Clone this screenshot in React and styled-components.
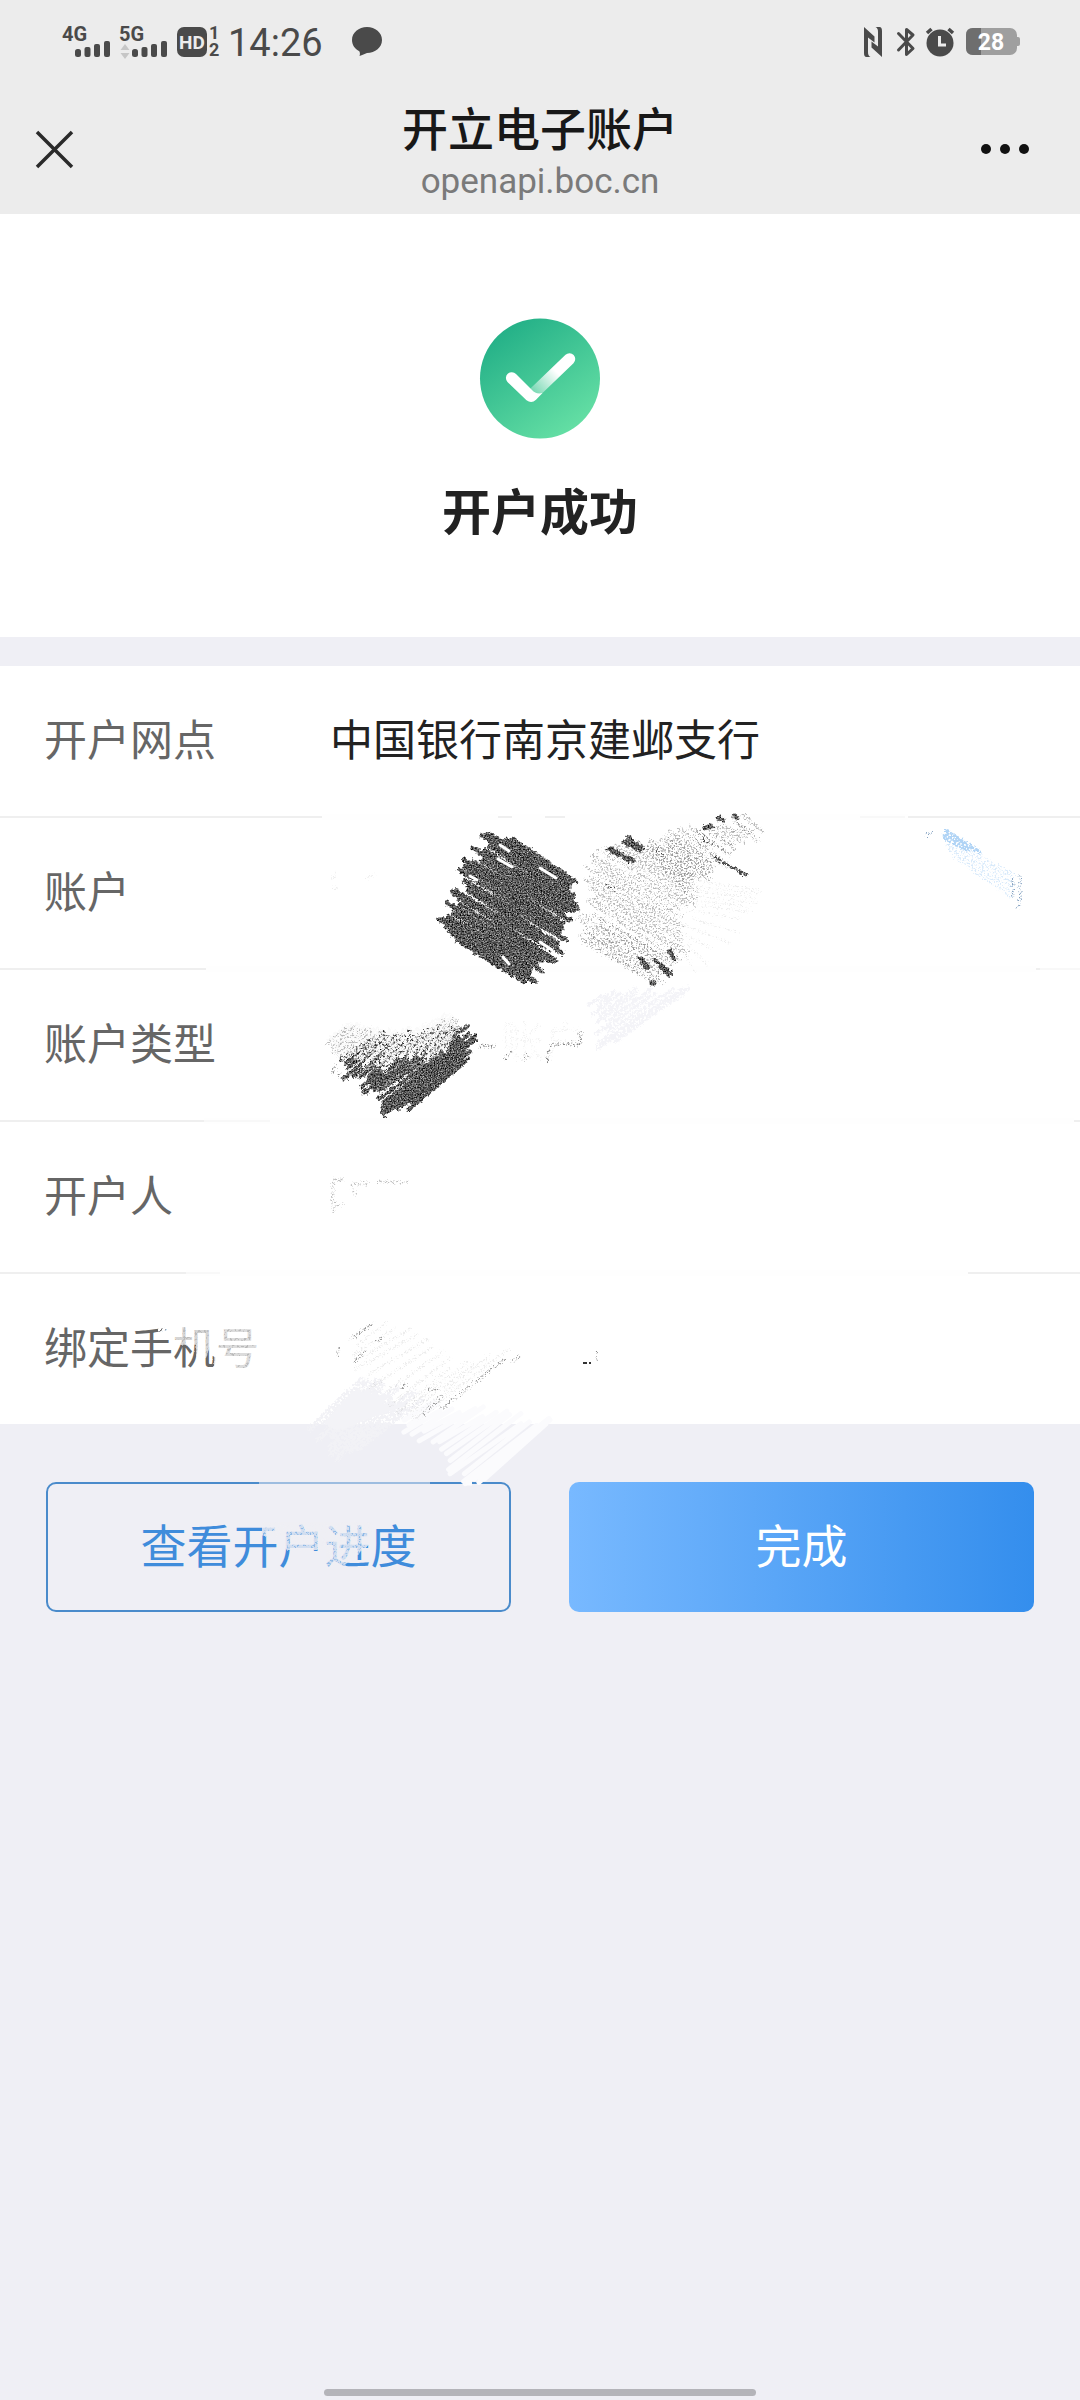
import React from "react";
import styled, { createGlobalStyle } from "styled-components";

const GlobalStyle = createGlobalStyle`
  * {
    box-sizing: border-box;
  }
  body {
    margin: 0;
    background-color: #efeff5;
    font-family: "Noto Sans CJK SC", sans-serif;
  }
`;
const Page = styled.div`
  display: flex;
  flex-direction: column;
  min-height: 100vh;
  overflow: hidden;
`;
const Header = styled.header`
  background-color: #ececec;
`;
const StatusBar = styled.div`
  display: flex;
  justify-content: space-between;
  align-items: center;
  height: 84px;
  padding: 0 60px 0 63px;
  color: #4a4a4a;
`;
const StatusGroup = styled.div`
  display: flex;
  align-items: center;
  gap: ${(props) => props.$gap}px;
`;
const Icon = styled.svg`
  display: block;
  flex: none;
  overflow: visible;
  font-family: Roboto, sans-serif;
  font-weight: 700;
`;
const Time = styled.time`
  padding-top: 2px;
  font-family: Roboto, sans-serif;
  font-size: 38px;
  line-height: 48px;
  margin-right: 20px;
`;
const NavBar = styled.div`
  display: flex;
  justify-content: space-between;
  align-items: center;
  height: 130px;
  padding: 0 50px 0 36px;
`;
const IconButton = styled.button`
  display: flex;
  flex: 1;
  justify-content: ${(props) => props.$align};
  padding: 0;
  border: none;
  background: none;
`;
const NavTitle = styled.div`
  padding: 6px 0 0 14px;
  text-align: center;
`;
const Title = styled.h1`
  margin: 0 0 4px;
  font-size: 46px;
  font-weight: 500;
  line-height: 56px;
  color: #181818;
`;
const Host = styled.div`
  font-family: Roboto, sans-serif;
  font-size: 35px;
  line-height: 48px;
  color: #7a7a7a;
`;
const Result = styled.section`
  display: flex;
  flex-direction: column;
  align-items: center;
  padding: 104px 0 92px;
  background-color: #ffffff;
`;
const ResultText = styled.h2`
  margin: 34px 0 0;
  font-size: 49px;
  font-weight: 700;
  line-height: 72px;
  color: #222222;
`;
const Content = styled.main`
  position: relative;
  margin-top: 29px;
`;
const Details = styled.dl`
  margin: 0;
  background-color: #ffffff;
`;
const Row = styled.div`
  display: flex;
  align-items: center;
  padding: 0 44px 8px;
  border-bottom: 2px solid #efefef;
  &:last-child {
    border-bottom: none;
  }
`;
const Label = styled.dt`
  width: 286px;
  font-size: 43px;
  line-height: 142px;
  color: #666666;
`;
const Value = styled.dd`
  margin: 0;
  font-size: 43px;
  line-height: 142px;
  color: #222222;
`;
const Actions = styled.div`
  display: grid;
  grid-template-columns: 1fr 1fr;
  gap: 58px;
  padding: 58px 46px;
`;
const Button = styled.button`
  height: 130px;
  padding: 0 0 8px;
  border: ${(props) => (props.$primary ? "none" : "2px solid #4a8bcb")};
  border-radius: 10px;
  background: ${(props) =>
    props.$primary ? "linear-gradient(90deg, #78b9ff, #348eed)" : "none"};
  color: ${(props) => (props.$primary ? "#ffffff" : "#3f8cdb")};
  font-family: inherit;
  font-size: 46px;
`;
const Overlay = styled.svg`
  position: absolute;
  top: 0;
  left: 0;
  width: 100%;
  pointer-events: none;
`;
const HomeBar = styled.div`
  align-self: center;
  width: 40%;
  height: 7px;
  margin: auto 0 4px;
  border-radius: 4px;
  background-color: #b4b4b9;
`;

const rows = [
  { label: "开户网点", value: "中国银行南京建邺支行" },
  { label: "账户", value: "" },
  { label: "账户类型", value: "" },
  { label: "开户人", value: "" },
  { label: "绑定手机号", value: "" },
];

function random(seed) {
  let s = seed;
  return () => {
    s = (s * 16807) % 2147483647;
    return s / 2147483647;
  };
}

// point at t (0..1) along a polyline
function along(points, t) {
  const pos = t * (points.length - 1);
  const i = Math.min(Math.floor(pos), points.length - 2);
  const f = pos - i;
  return [
    points[i][0] + (points[i + 1][0] - points[i][0]) * f,
    points[i][1] + (points[i + 1][1] - points[i][1]) * f,
  ];
}

// roughly parallel pencil strokes between two edges
function hatch(from, to, count, jitter, seed) {
  const next = random(seed * 7919);
  next();
  let d = "";
  for (let i = 0; i < count; i++) {
    const t = i / (count - 1);
    const [x1, y1] = along(from, t);
    const [x2, y2] = along(to, t);
    const a = (next() - 0.5) * jitter;
    const b = (next() - 0.5) * jitter;
    const lift = (next() - 0.5) * 4;
    const len = Math.hypot(x2 - x1, y2 - y1) || 1;
    const ux = (x2 - x1) / len;
    const uy = (y2 - y1) / len;
    d += `M${(x1 + ux * a).toFixed(1)} ${(y1 + uy * a + lift).toFixed(1)}`;
    d += `L${(x2 + ux * b).toFixed(1)} ${(y2 + uy * b - lift).toFixed(1)}`;
  }
  return d;
}

function Hatch({ from, to, count, jitter = 16, seed = 7, width = 5, ...rest }) {
  return (
    <path
      d={hatch(from, to, count, jitter, seed)}
      strokeWidth={width}
      strokeLinecap="round"
      fill="none"
      {...rest}
    />
  );
}

function Scribbles() {
  return (
    <Overlay viewBox="0 666 1080 960" aria-hidden="true">
      <defs>
        <filter id="charcoal" x="-10%" y="-10%" width="120%" height="120%" colorInterpolationFilters="sRGB">
          <feTurbulence type="fractalNoise" baseFrequency="0.3" numOctaves="2" seed="3" result="wave" />
          <feDisplacementMap in="SourceGraphic" in2="wave" scale="6" xChannelSelector="R" yChannelSelector="G" result="edge" />
          <feTurbulence type="fractalNoise" baseFrequency="0.73" numOctaves="2" seed="8" />
          <feColorMatrix values="1.3 0 0 0 -0.3  1.3 0 0 0 -0.3  1.3 0 0 0 -0.3  0 0 0 0 1" />
          <feComposite in2="edge" operator="in" />
        </filter>
        <filter id="dust" x="-10%" y="-10%" width="120%" height="120%" colorInterpolationFilters="sRGB">
          <feTurbulence type="fractalNoise" baseFrequency="0.57" numOctaves="3" seed="5" result="noise" />
          <feDisplacementMap in="SourceGraphic" in2="noise" scale="7" xChannelSelector="B" yChannelSelector="G" result="edge" />
          <feColorMatrix in="noise" values="0 0 0 0 0  0 0 0 0 0  0 0 0 0 0  6 0 0 0 -2.9" result="mask" />
          <feComposite in="edge" in2="mask" operator="in" />
        </filter>
        <filter id="chalk" x="-10%" y="-10%" width="120%" height="120%" colorInterpolationFilters="sRGB">
          <feTurbulence type="fractalNoise" baseFrequency="0.43" numOctaves="2" seed="9" result="noise" />
          <feDisplacementMap in="SourceGraphic" in2="noise" scale="6" xChannelSelector="R" yChannelSelector="G" result="edge" />
          <feColorMatrix in="noise" values="0 0 0 0 0  0 0 0 0 0  0 0 0 0 0  8 0 0 0 -2.8" result="mask" />
          <feComposite in="edge" in2="mask" operator="in" />
        </filter>
      </defs>

      {/* rubbed out dividers */}
      <path d="M322 817H498M512 817H545M565 817H908M206 969H1036M204 1121H1074M186 1273H968" stroke="#fefefe" strokeWidth="6" />
      <path d="M204 1121H270M186 1273H220M860 817H905M1040 969H1080" stroke="#f8f8f8" strokeWidth="2" />

      {/* account number */}
      <Hatch from={[[508, 836], [484, 838], [473, 856], [464, 876], [458, 894], [446, 916], [458, 942]]} to={[[572, 880], [576, 898], [566, 916], [562, 936], [550, 954], [540, 968], [526, 981]]} count={26} width={5} jitter={20} seed={12} stroke="#444" filter="url(#charcoal)" />
      <path d="M438 919L466 938M454 895L470 905M486 834L500 843M558 912L574 910" stroke="#444" strokeWidth="4" strokeLinecap="round" filter="url(#charcoal)" />
      <path d="M500 845L509 851M498 859L512 867M470 876L477 880M540 868L556 878M503 957L509 964M540 942L552 950" stroke="#ffffff" strokeWidth="3" strokeLinecap="round" />
      <Hatch from={[[742, 816], [676, 834], [640, 850], [603, 846], [592, 872], [590, 900], [580, 938]]} to={[[762, 830], [718, 866], [696, 880], [690, 890], [684, 925], [680, 955], [652, 982]]} count={34} width={4} seed={4} stroke="#777" opacity="0.5" filter="url(#dust)" />
      <Hatch from={[[600, 920], [582, 936]]} to={[[676, 962], [652, 982]]} count={7} width={3} stroke="#777" opacity="0.5" filter="url(#dust)" />
      <Hatch from={[[735, 822], [676, 836], [650, 852]]} to={[[752, 832], [706, 866], [684, 888]]} count={14} width={4} stroke="#777" opacity="0.5" filter="url(#dust)" />
      <path d="M628 838L642 848M624 842L640 850M608 849L632 861M612 850L632 860M656 961L670 974M660 964L668 974M705 828L711 826M719 818L723 820M735 817L737 818M641 960L647 967M652 983L654 983M670 952L674 958" stroke="#333" strokeWidth="5" strokeLinecap="round" filter="url(#charcoal)" />
      <path d="M714 857L748 876" stroke="#444" strokeWidth="3" filter="url(#chalk)" />
      <path d="M702 838L712 846M656 848L664 856M604 884L616 890" stroke="#444" strokeWidth="3" filter="url(#dust)" />
      <Hatch from={[[690, 880], [692, 905], [680, 950]]} to={[[762, 890], [745, 915], [700, 975]]} count={12} width={2} stroke="#bbb" opacity="0.25" filter="url(#dust)" />
      <Hatch from={[[588, 1006], [600, 1020], [605, 1042], [630, 1032]]} to={[[605, 994], [640, 994], [680, 996], [684, 990]]} count={14} width={4} jitter={26} stroke="#f4f4f8" filter="url(#chalk)" />
      <path d="M332 880L336 872M332 886L337 890M366 878L376 874" stroke="#eeeeee" strokeWidth="3" filter="url(#dust)" />
      <Hatch from={[[946, 831], [944, 836]]} to={[[980, 852], [966, 850]]} count={4} width={4} jitter={6} stroke="#a9d0f5" opacity="0.9" filter="url(#chalk)" />
      <Hatch from={[[945, 838], [950, 852]]} to={[[1013, 874], [1008, 896]]} count={6} width={3} stroke="#b4d6f7" opacity="0.5" filter="url(#dust)" />
      <path d="M1020 875V898L1018 908M1013 880V898M926 835L934 832" stroke="#86a3c2" strokeWidth="3" fill="none" filter="url(#dust)" />

      {/* account type */}
      <Hatch from={[[340, 1062], [352, 1072], [366, 1080], [367, 1092], [386, 1098], [387, 1113], [410, 1107]]} to={[[372, 1036], [400, 1034], [430, 1030], [464, 1026], [470, 1036], [468, 1048], [464, 1064]]} count={20} width={4} jitter={20} seed={21} stroke="#444" filter="url(#charcoal)" />
      <path d="M384 1115L404 1090M410 1108L430 1088M366 1092L384 1074" stroke="#444" strokeWidth="4" strokeLinecap="round" filter="url(#charcoal)" />
      <Hatch from={[[330, 1040], [342, 1054], [384, 1068], [400, 1050], [428, 1062], [446, 1046]]} to={[[350, 1024], [380, 1034], [405, 1034], [425, 1026], [444, 1018], [456, 1020]]} count={20} width={6} jitter={10} stroke="#fafafa" filter="url(#chalk)" />
      <Hatch from={[[324, 1046], [340, 1056], [380, 1066], [400, 1050], [430, 1058], [448, 1044]]} to={[[346, 1028], [375, 1034], [405, 1042], [425, 1032], [448, 1020], [462, 1022]]} count={24} width={3} stroke="#777" opacity="0.5" filter="url(#dust)" />
      <text x="501" y="1058" fontSize="43" fill="#888" opacity="0.1" filter="url(#dust)">账户</text>
      <path d="M478 1046H496M552 1044H580V1030M504 1060L512 1050M546 1062L551 1046M332 1074L336 1064M338 1077L340 1072M524 1060L527 1054" stroke="#888" strokeWidth="3" fill="none" filter="url(#dust)" />

      {/* account holder */}
      <path d="M333 1212V1180H344M350 1184H368M336 1205H343M352 1190L356 1196M378 1182H410" stroke="#999" strokeWidth="3" fill="none" opacity="0.6" filter="url(#dust)" />

      {/* phone number */}
      <path d="M152 1320L172 1318V1332H160Z" fill="#ffffff" filter="url(#chalk)" />
      <path d="M172 1320H212V1340L206 1358H196V1345H176Z" fill="#ffffff" opacity="0.4" filter="url(#chalk)" />
      <path d="M172 1320H212V1340L206 1358H196V1345H176ZM214 1322H260V1370H214Z" fill="#ffffff" opacity="0.55" />
      <path d="M214 1322H260V1370H214Z" fill="#ffffff" opacity="0.5" filter="url(#chalk)" />
      <Hatch from={[[316, 1424], [334, 1438], [354, 1454]]} to={[[354, 1384], [385, 1392], [410, 1408]]} count={18} width={5} jitter={34} seed={5} stroke="#f2f2f6" filter="url(#chalk)" />
      <Hatch from={[[326, 1424], [350, 1424]]} to={[[354, 1392], [402, 1404]]} count={14} width={4} jitter={14} stroke="#f3f3f7" />
      <Hatch from={[[398, 1424], [418, 1440], [446, 1458], [466, 1482], [490, 1474]]} to={[[430, 1404], [470, 1410], [510, 1412], [540, 1424], [546, 1424]]} count={20} width={5} jitter={22} seed={9} stroke="#fbfbfd" />
      <Hatch from={[[350, 1340], [356, 1370], [400, 1408], [422, 1416]]} to={[[374, 1322], [420, 1338], [450, 1366], [506, 1350]]} count={14} width={3} stroke="#999" opacity="0.18" filter="url(#dust)" />
      <path d="M352 1338L372 1324M354 1362L366 1350M402 1388L407 1383M422 1416L442 1396M440 1410L506 1358M376 1342L384 1338M338 1348V1356M520 1357L512 1362M428 1389H438" stroke="#777" strokeWidth="3" fill="none" opacity="0.7" filter="url(#dust)" />
      <path d="M583 1363H591" stroke="#333" strokeWidth="2" strokeDasharray="4 2" />
      <path d="M596 1360L597 1352" stroke="#888" strokeWidth="3" filter="url(#dust)" />

      {/* worn button outline and caption */}
      <path d="M259 1483H430" stroke="#efeff5" strokeWidth="6" opacity="0.5" />
      <path d="M259 1483H430" stroke="#efeff5" strokeWidth="6" filter="url(#chalk)" />
      <path d="M466 1483H472" stroke="#fcfcfd" strokeWidth="5" />
      <path d="M262 1522H372V1542L344 1566H326V1550H286V1536H262Z" fill="#efeff5" opacity="0.45" />
      <path d="M262 1522H372V1542L344 1566H326V1550H286V1536H262Z" fill="#efeff5" opacity="0.7" filter="url(#chalk)" />
    </Overlay>
  );
}

function Signal({ name, arrows }) {
  return (
    <Icon width="48" height="32" viewBox="0 0 48 32" fill="currentColor">
      <text x="-1" y="15" fontSize="20">{name}</text>
      {arrows && <path d="M5 18L9.500 24H.5ZM5 33L.5 27H9.500Z" fill="#c6c6c6" />}
      <rect x="12" y="23" width="6" height="8" rx="2.500" />
      <rect x="21.500" y="21" width="6" height="10" rx="2" />
      <rect x="31" y="18" width="6" height="13" rx="2" />
      <rect x="41" y="15" width="6" height="16" rx="2" />
    </Icon>
  );
}

function App() {
  return (
    <Page>
      <GlobalStyle />
      <Header>
        <StatusBar>
          <StatusGroup $gap={9}>
            <Signal name="4G" />
            <Signal name="5G" arrows />
            <Icon width="42" height="30" viewBox="0 0 42 30" fill="currentColor">
              <rect width="30" height="30" rx="7" />
              <text x="15" y="22" fontSize="19" textAnchor="middle" fill="#ececec">HD</text>
              <text x="32" y="12" fontSize="18">1</text>
              <text x="32" y="29" fontSize="18">2</text>
            </Icon>
            <Time>14:26</Time>
            <Icon width="30" height="30" viewBox="0 0 30 30" fill="currentColor">
              <path d="M15 0C23.300 0 30 5.600 30 13S23.300 26 15 26C12.500 26.800 10.500 28 7.500 29C8.200 27 8 25.500 7.300 24.200C3 22 0 18 0 13C0 5.600 6.700 0 15 0Z" />
            </Icon>
          </StatusGroup>
          <StatusGroup $gap={10}>
            <Icon width="22" height="30" viewBox="0 0 22 30" fill="currentColor">
              <path d="M0 0L10.500 9.500V15.500L4 10.500V25C4 27.500 4.500 29 6.500 30H2.500C.8 30 0 28.500 0 26Z" />
              <path d="M18 30L7.500 20.500V14.500L14 19.500V5C14 2.500 13.500 1 11.500 0H15.500C17.200 0 18 1.500 18 4Z" />
            </Icon>
            <Icon width="20" height="30" viewBox="0 0 20 30" fill="none" stroke="currentColor" strokeWidth="3" strokeLinejoin="round" strokeLinecap="round">
              <path d="M2.500 6.500L17 21.500L10.500 27.500V2.500L17 8L2.500 23" />
            </Icon>
            <Icon width="30" height="30" viewBox="0 0 30 30" fill="currentColor">
              <circle cx="14" cy="16" r="13.500" />
              <path d="M1 6L5.500 2M22.500 2L27 6" stroke="currentColor" strokeWidth="3.500" />
              <path d="M13.500 9V18H20" fill="none" stroke="#ececec" strokeWidth="3" />
            </Icon>
            <Icon width="54" height="28" viewBox="0 0 54 28">
              <rect y="0" width="51" height="27" rx="7" fill="#9f9f9f" />
              <path d="M51 9H52Q54 9 54 11V16Q54 18 52 18H51Z" fill="#9f9f9f" />
              <path d="M15 0V27H7Q0 27 0 20V7Q0 0 7 0Z" fill="#6e6e6e" />
              <text x="25" y="22" fontSize="23" textAnchor="middle" fill="#ffffff">28</text>
            </Icon>
          </StatusGroup>
        </StatusBar>
        <NavBar>
          <IconButton type="button" aria-label="关闭" $align="flex-start">
            <Icon width="37" height="37" viewBox="0 0 37 37" stroke="#2a2a2a" strokeWidth="3.500">
              <path d="M1 1L36 36M36 1L1 36" />
            </Icon>
          </IconButton>
          <NavTitle>
            <Title>开立电子账户</Title>
            <Host>openapi.boc.cn</Host>
          </NavTitle>
          <IconButton type="button" aria-label="更多" $align="flex-end">
            <Icon width="50" height="10" viewBox="0 0 50 10" fill="#111111">
              <circle cx="6" cy="5" r="5" />
              <circle cx="25" cy="5" r="5" />
              <circle cx="44" cy="5" r="5" />
            </Icon>
          </IconButton>
        </NavBar>
      </Header>
      <Result>
        <Icon width="120" height="121" viewBox="0 0 120 120">
          <defs>
            <linearGradient id="disc" x1="0.2" y1="0.1" x2="0.8" y2="0.95">
              <stop offset="0" stopColor="#25b188" />
              <stop offset="1" stopColor="#66e0a5" />
            </linearGradient>
            <linearGradient id="arm" gradientUnits="userSpaceOnUse" x1="54" y1="75" x2="76" y2="53">
              <stop offset="0" stopColor="#ffffff" stopOpacity="0.25" />
              <stop offset="1" stopColor="#ffffff" />
            </linearGradient>
          </defs>
          <circle cx="60" cy="60" r="60" fill="url(#disc)" />
          <path d="M51.500 77L89.500 40.500" stroke="url(#arm)" strokeWidth="11.500" strokeLinecap="round" />
          <path d="M27.500 63.500A5.800 5.800 0 0 1 36 55.500L52 71.500C54.500 74.500 58 75.500 62.500 74.500L56 81.300Q51.500 85.500 46.500 81.800Z" fill="#ffffff" />
        </Icon>
        <ResultText>开户成功</ResultText>
      </Result>
      <Content>
        <Details>
          {rows.map((row) => (
            <Row key={row.label}>
              <Label>{row.label}</Label>
              <Value>{row.value}</Value>
            </Row>
          ))}
        </Details>
        <Actions>
          <Button type="button">查看开户进度</Button>
          <Button type="button" $primary>
            完成
          </Button>
        </Actions>
        <Scribbles />
      </Content>
      <HomeBar />
    </Page>
  );
}

export default App;
